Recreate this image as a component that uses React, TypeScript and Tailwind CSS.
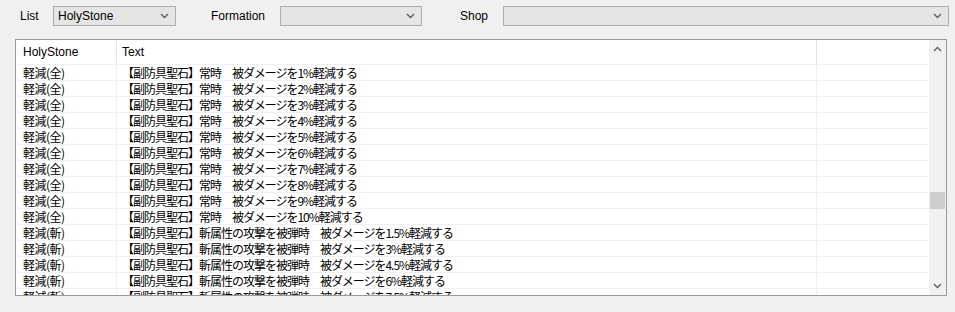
const font = { fontFamily: '"Noto Sans CJK JP", "Noto Sans", sans-serif' };
const latin = { fontFamily: '"Liberation Sans", Arial, sans-serif' };

type Row = { kind: string; text: string };

const rows: Row[] = [
    ...[1, 2, 3, 4, 5, 6, 7, 8, 9, 10].map((n) => ({
        kind: "軽減(全)",
        text: `【副防具聖石】常時　被ダメージを${n}%軽減する`,
    })),
    ...["1.5", "3", "4.5", "6", "7.5"].map((n) => ({
        kind: "軽減(斬)",
        text: `【副防具聖石】斬属性の攻撃を被弾時　被ダメージを${n}%軽減する`,
    })),
];

function Chevron({ up }: { up?: boolean }) {
    return (
        <svg width="9" height="6" viewBox="0 0 9 6" className="shrink-0">
            <path
                d={up ? "M1 5 L4.5 1.5 L8 5" : "M1 1 L4.5 4.5 L8 1"}
                fill="none"
                stroke="#606060"
                strokeWidth="1.4"
            />
        </svg>
    );
}

function Combo({ value, width }: { value?: string; width: string }) {
    return (
        <div
            className={`${width} h-[20px] border border-[#adadad] bg-[#e5e5e5] flex items-center justify-between pl-[4px] pr-[6px]`}
        >
            <span className="text-[12px] text-black leading-none" style={latin}>{value}</span>
            <Chevron />
        </div>
    );
}

export default function App() {
    return (
        <div className="w-[955px] h-[312px] bg-[#f0f0f0] overflow-hidden text-black" style={font}>
            <div className="flex items-center h-[39px] pb-[7px] text-[12px]" style={latin}>
                <span className="ml-[20px] w-[33px]">List</span>
                <Combo value="HolyStone" width="w-[123px]" />
                <span className="ml-[35px] w-[69px]">Formation</span>
                <Combo width="w-[142px]" />
                <span className="ml-[38px] w-[43px]">Shop</span>
                <Combo width="w-[446px]" />
            </div>
            <div className="ml-[15px] w-[932px] h-[257px] border border-[#9a9a9a] bg-white flex">
                <div className="flex-1 overflow-hidden text-[12px]">
                    <div className="flex h-[25px] items-center border-b border-[#f0f0f0]" style={latin}>
                        <div className="w-[101px] h-full flex items-center pl-[7px] border-r border-[#e5e5e5]">HolyStone</div>
                        <div className="w-[700px] h-full flex items-center pl-[5px] border-r border-[#e5e5e5]">Text</div>
                        <div className="flex-1 h-full" />
                    </div>
                    {rows.map((r, i) => (
                        <div key={i} className="flex h-[16px] items-center border-b border-[#f0f0f0] whitespace-pre">
                            <div className="w-[101px] h-full flex items-center pl-[7px] border-r border-[#f0f0f0] tracking-[-0.5px]">{r.kind}</div>
                            <div className="w-[700px] h-full flex items-center pl-[5px] border-r border-[#f0f0f0] tracking-[-1px]">{r.text}</div>
                            <div className="flex-1 h-full" />
                        </div>
                    ))}
                </div>
                <div className="w-[17px] h-full bg-[#f0f0f0] relative flex flex-col items-center justify-between py-[6px]">
                    <Chevron up />
                    <div className="absolute left-[1px] top-[152px] w-[15px] h-[17px] bg-[#cdcdcd]" />
                    <Chevron />
                </div>
            </div>
        </div>
    );
}
